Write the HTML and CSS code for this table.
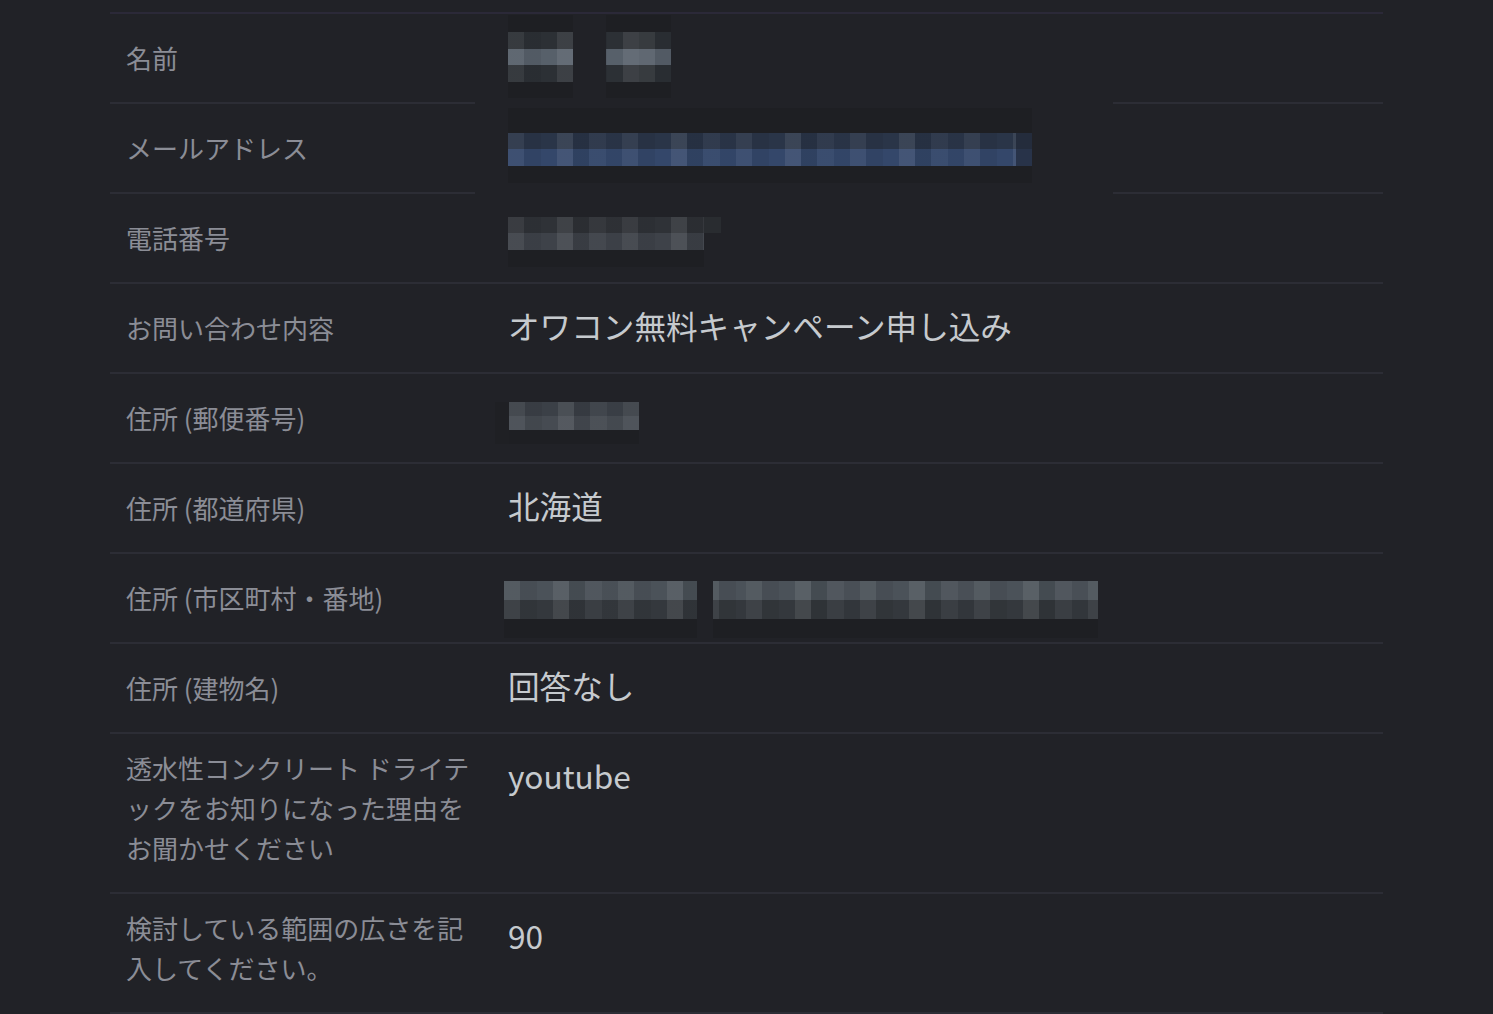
FILE: index.html
```html
<!DOCTYPE html>
<html lang="ja">
<head>
<meta charset="utf-8">
<title>お問い合わせ内容</title>
<link rel="stylesheet" href="styles.css">
</head>
<body>
<div class="sheet">
  <div class="row">
    <div class="label">名前</div>
    <div class="value">
      <div class="redact redact-name">
        <div class="mz-group g-name">
          <div class="mz halo"></div><div class="mz n-a"></div><div class="mz n-b"></div><div class="mz n-a"></div><div class="mz halo"></div>
        </div>
        <div class="mz-group g-name">
          <div class="mz halo"></div><div class="mz n-a shift"></div><div class="mz n-b shift"></div><div class="mz n-a shift"></div><div class="mz halo"></div>
        </div>
      </div>
    </div>
  </div>
  <div class="row">
    <div class="label">メールアドレス</div>
    <div class="value">
      <div class="cover">
        <div class="redact-mail">
          <div class="mz halo tall"></div>
          <div class="mz e-a"></div>
          <div class="mz e-b"></div>
          <div class="mz halo"></div>
        </div>
      </div>
    </div>
  </div>
  <div class="row">
    <div class="label">電話番号</div>
    <div class="value">
      <div class="redact redact-phone">
        <div class="mz p-a"></div>
        <div class="mz p-b"></div>
        <div class="mz halo"></div>
      </div>
    </div>
  </div>
  <div class="row">
    <div class="label">お問い合わせ内容</div>
    <div class="value">オワコン無料キャンペーン申し込み</div>
  </div>
  <div class="row">
    <div class="label">住所 (郵便番号)</div>
    <div class="value">
      <div class="redact redact-zip">
        <div class="mz z-a"></div>
        <div class="mz z-b"></div>
        <div class="mz halo"></div>
      </div>
    </div>
  </div>
  <div class="row">
    <div class="label">住所 (都道府県)</div>
    <div class="value">北海道</div>
  </div>
  <div class="row">
    <div class="label">住所 (市区町村・番地)</div>
    <div class="value">
      <div class="redact redact-city">
        <div class="mz-group g-city1">
          <div class="mz c-a"></div><div class="mz c-b"></div><div class="mz halo"></div>
        </div>
        <div class="mz-group g-city2">
          <div class="mz c-a shift"></div><div class="mz c-b shift"></div><div class="mz halo"></div>
        </div>
      </div>
    </div>
  </div>
  <div class="row">
    <div class="label">住所 (建物名)</div>
    <div class="value">回答なし</div>
  </div>
  <div class="row multi">
    <div class="label">透水性コンクリート ドライテックをお知りになった理由をお聞かせください</div>
    <div class="value">youtube</div>
  </div>
  <div class="row multi">
    <div class="label">検討している範囲の広さを記入してください。</div>
    <div class="value">90</div>
  </div>
</div>
</body>
</html>
```
FILE: styles.css
```css
html, body {
  margin: 0;
  padding: 0;
  background: #212227;
}

body {
  font-family: "Noto Sans CJK JP", "Noto Sans", sans-serif;
  -webkit-font-smoothing: antialiased;
}

.sheet {
  margin: 12px 0 0 110px;
  width: 1273px;
  border-top: 2px solid #2b2938;
}

.row {
  display: flex;
  min-height: 88px;
  border-bottom: 2px solid #2c2d35;
}

.label {
  flex: 0 0 382px;
  box-sizing: border-box;
  padding: 0 16px;
  align-self: center;
  font-size: 26px;
  line-height: 40px;
  color: #8b8d96;
}

.row.multi .label {
  align-self: flex-start;
  padding-top: 14px;
  padding-bottom: 24px;
}

.value {
  flex: 1;
  position: relative;
  padding: 17px 16px 23px;
  font-size: 31.6px;
  line-height: 48px;
  color: #c6cace;
}

/* redaction mosaics */
.redact {
  position: absolute;
}

.mz {
  height: 16px;
  background-image: repeating-linear-gradient(90deg,
    rgba(255,255,255,.05) 0 16px,
    rgba(0,0,0,.06) 16px 33px,
    rgba(255,255,255,0) 33px 49px,
    rgba(255,255,255,.08) 49px 65px,
    rgba(0,0,0,.09) 65px 81px,
    rgba(255,255,255,.03) 81px 98px,
    rgba(0,0,0,.03) 98px 114px);
}

.mz.shift {
  background-position: 33px 0;
}

.mz.halo {
  background-color: #1e1f23;
  background-image: none;
  height: 17px;
}

.redact-name {
  left: 16px;
  top: 1px;
  display: flex;
  gap: 33px;
}
.g-name { width: 65px; }
.n-a { background-color: #2c3035; height: 17px; }
.n-b { background-color: #57606a; }

.cover {
  position: absolute;
  left: -17px;
  top: -6px;
  width: 638px;
  height: 104px;
  background: #212227;
}

.redact-mail {
  margin: 10px 0 0 33px;
  width: 524px;
}
.mz.tall { height: 25px; }
.e-a {
  background-color: #2a3548;
  box-shadow: inset -16px 0 0 #242c3c;
}
.e-b {
  background-color: #34476a;
  height: 17px;
  box-shadow: inset -16px 0 0 #283349;
}

.redact-phone {
  left: 16px;
  top: 23px;
}
.p-a { width: 213px; background-color: #2f3237; box-shadow: inset -17px 0 0 #292c30; }
.p-b { width: 196px; height: 17px; background-color: #3e4249; }
.redact-phone .halo { width: 196px; }

.redact-zip {
  left: 17px;
  top: 28px;
  width: 130px;
  box-shadow: -14px 0 0 #1f2024;
}
.z-a { height: 14px; background-color: #3b4047; }
.z-b { height: 14px; background-color: #464b52; }
.redact-zip .halo { height: 14px; }

.redact-city {
  left: 12px;
  top: 27px;
  display: flex;
  gap: 16px;
}
.g-city1 { width: 193px; }
.g-city2 { width: 385px; }
.c-a { height: 19px; background-color: #4b5259; }
.c-b { height: 19px; background-color: #34383d; }
.redact-city .halo { height: 19px; }
```
